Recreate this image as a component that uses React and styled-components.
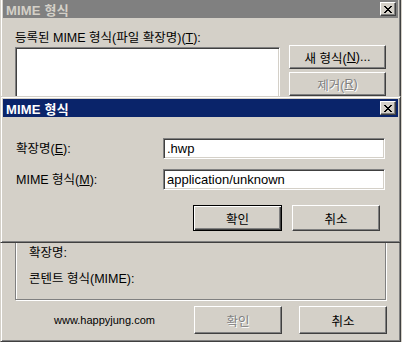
import React from "react";
import styled, { createGlobalStyle, css } from "styled-components";

const Global = createGlobalStyle`
  html, body { margin: 0; padding: 0; background: #d4d0c8; }
  body { width: 402px; height: 342px; overflow: hidden; font-family: "Liberation Sans", "Noto Sans CJK KR", sans-serif; font-size: 12px; color: #000; }
  u { text-decoration: underline; text-underline-offset: 1px; }
`;

const Desktop = styled.div`
  position: relative;
  width: 402px;
  height: 342px;
`;

const Window = styled.div`
  box-sizing: border-box;
  width: 401px;
  height: 342px;
  display: flex;
  flex-direction: column;
  background: #d4d0c8;
  border-left: 1px solid #d4d0c8;
  border-right: 1px solid #404040;
  border-bottom: 1px solid #404040;
  box-shadow: inset 1px 0 #fff, inset -1px -1px #808080;
  padding: 0 2px 2px 2px;
`;

const TitleBar = styled.div`
  height: 18px;
  margin-top: ${(p) => (p.$active ? "2px" : "0")};
  display: flex;
  align-items: center;
  justify-content: space-between;
  padding: 0 2px 0 3px;
  background: ${(p) => (p.$active ? "#0a246a" : "#808080")};
  color: ${(p) => (p.$active ? "#fff" : "#d4d0c8")};
  font-weight: bold;
  font-size: 13px;
  letter-spacing: 0.2px;
`;

const CloseBtn = styled.div`
  box-sizing: border-box;
  width: 16px;
  height: 14px;
  background: #d4d0c8;
  border-top: 1px solid #fff;
  border-left: 1px solid #fff;
  border-right: 1px solid #404040;
  border-bottom: 1px solid #404040;
  box-shadow: inset -1px -1px #808080;
  display: flex;
  align-items: center;
  justify-content: center;
`;

const Close = () => (
  <CloseBtn>
    <svg width="8" height="7" viewBox="0 0 8 7" shapeRendering="crispEdges">
      <path d="M0 0h2v1h-2zM6 0h2v1h-2zM1 1h2v1h-2zM5 1h2v1h-2zM2 2h4v1h-4zM3 3h2v1h-2zM2 4h4v1h-4zM1 5h2v1h-2zM5 5h2v1h-2zM0 6h2v1h-2zM6 6h2v1h-2z" fill="#000" />
    </svg>
  </CloseBtn>
);

const Body = styled.div`
  flex: 1;
  display: flex;
  flex-direction: column;
  padding: 13px 11px 0 12px;
`;

const Label = styled.div`
  line-height: 14px;
  white-space: nowrap;
  font-size: 12.5px;
`;

const TopRow = styled.div`
  display: flex;
  gap: 9px;
  margin-top: 2px;
`;

const ListBox = styled.div`
  box-sizing: border-box;
  width: 265px;
  height: 80px;
  background: #fff;
  border-top: 1px solid #808080;
  border-left: 1px solid #808080;
  border-right: 1px solid #fff;
  border-bottom: 1px solid #fff;
  box-shadow: inset 1px 1px #404040, inset -1px -1px #d4d0c8;
`;

const BtnCol = styled.div`
  display: flex;
  flex-direction: column;
  gap: 3px;
  margin-top: -2px;
`;

const Button = styled.div`
  box-sizing: border-box;
  width: ${(p) => p.$w || 88}px;
  height: ${(p) => p.$h || 23}px;
  display: flex;
  align-items: center;
  justify-content: center;
  background: #d4d0c8;
  white-space: nowrap;
  font-size: 12.5px;
  ${(p) =>
    p.$default
      ? css`
          border: 1px solid #000;
          box-shadow: inset 1px 1px #fff, inset -1px -1px #404040, inset -2px -2px #808080;
        `
      : css`
          border-top: 1px solid #fff;
          border-left: 1px solid #fff;
          border-right: 1px solid #404040;
          border-bottom: 1px solid #404040;
          box-shadow: inset -1px -1px #808080;
        `}
  ${(p) =>
    p.$disabled &&
    css`
      color: #808080;
      text-shadow: 1px 1px #fff;
    `}
`;

const GroupBox = styled.div`
  flex: 1;
  margin-top: 10px;
  border: 1px solid #808080;
  box-shadow: 1px 1px #fff, inset 1px 1px #fff;
  display: flex;
  flex-direction: column;
  justify-content: flex-end;
  gap: 12px;
  padding: 0 12px 13px 13px;
  margin-right: 1px;
`;

const Footer = styled.div`
  height: 38px;
  display: flex;
  align-items: center;
  padding-top: 1px;
`;

const Site = styled.div`
  width: 183px;
  text-align: center;
  font-size: 11px;
  font-family: "Liberation Sans", sans-serif;
`;

const FooterBtns = styled.div`
  display: flex;
  gap: 17px;
`;

/* front dialog */
const Dialog = styled.div`
  position: absolute;
  top: 96px;
  left: 0;
  box-sizing: border-box;
  width: 401px;
  height: 147px;
  background: #d4d0c8;
  border-top: 1px solid #d4d0c8;
  border-left: 1px solid #d4d0c8;
  border-right: 1px solid #404040;
  border-bottom: 1px solid #404040;
  box-shadow: inset 1px 1px #fff, inset -1px -1px #808080;
  padding: 0 2px 2px 2px;
  display: flex;
  flex-direction: column;
`;

const DlgBody = styled.div`
  display: flex;
  flex-direction: column;
  padding: 21px 13px 0 13px;
`;

const FieldRow = styled.div`
  display: flex;
  align-items: center;
  justify-content: space-between;
  height: 21px;
  margin-bottom: 10px;
`;

const Input = styled.div`
  box-sizing: border-box;
  width: 222px;
  height: 21px;
  background: #fff;
  border-top: 1px solid #808080;
  border-left: 1px solid #808080;
  border-right: 1px solid #fff;
  border-bottom: 1px solid #fff;
  box-shadow: inset 1px 1px #404040, inset -1px -1px #d4d0c8;
  padding: 2px 0 0 3px;
  line-height: 15px;
  font-size: 13px;
  font-family: "Liberation Sans", sans-serif;
`;

const DlgBtns = styled.div`
  display: flex;
  justify-content: flex-end;
  gap: 10px;
  margin-top: 5px;
  padding-right: 5px;
`;

export default function App() {
  return (
    <Desktop>
      <Global />
      <Window>
        <TitleBar>
          <span>MIME 형식</span>
          <Close />
        </TitleBar>
        <Body>
          <Label>
            등록된 MIME 형식(파일 확장명)(<u>T</u>):
          </Label>
          <TopRow>
            <ListBox />
            <BtnCol>
              <Button $w={97} $h={24}>
                새 형식(<u>N</u>)...
              </Button>
              <Button $w={97} $h={24} $disabled>
                제거(<u>R</u>)
              </Button>
            </BtnCol>
          </TopRow>
          <GroupBox>
            <Label>확장명:</Label>
            <Label>콘텐트 형식(MIME):</Label>
          </GroupBox>
          <Footer>
            <Site>www.happyjung.com</Site>
            <FooterBtns>
              <Button $w={88} $h={28} $disabled>
                확인
              </Button>
              <Button $w={88} $h={28}>
                취소
              </Button>
            </FooterBtns>
          </Footer>
        </Body>
      </Window>
      <Dialog>
        <TitleBar $active>
          <span>MIME 형식</span>
          <Close />
        </TitleBar>
        <DlgBody>
          <FieldRow>
            <Label>
              확장명(<u>E</u>):
            </Label>
            <Input>.hwp</Input>
          </FieldRow>
          <FieldRow>
            <Label>
              MIME 형식(<u>M</u>):
            </Label>
            <Input>application/unknown</Input>
          </FieldRow>
          <DlgBtns>
            <Button $w={89} $h={26} $default>
              확인
            </Button>
            <Button $w={88} $h={26}>
              취소
            </Button>
          </DlgBtns>
        </DlgBody>
      </Dialog>
    </Desktop>
  );
}
